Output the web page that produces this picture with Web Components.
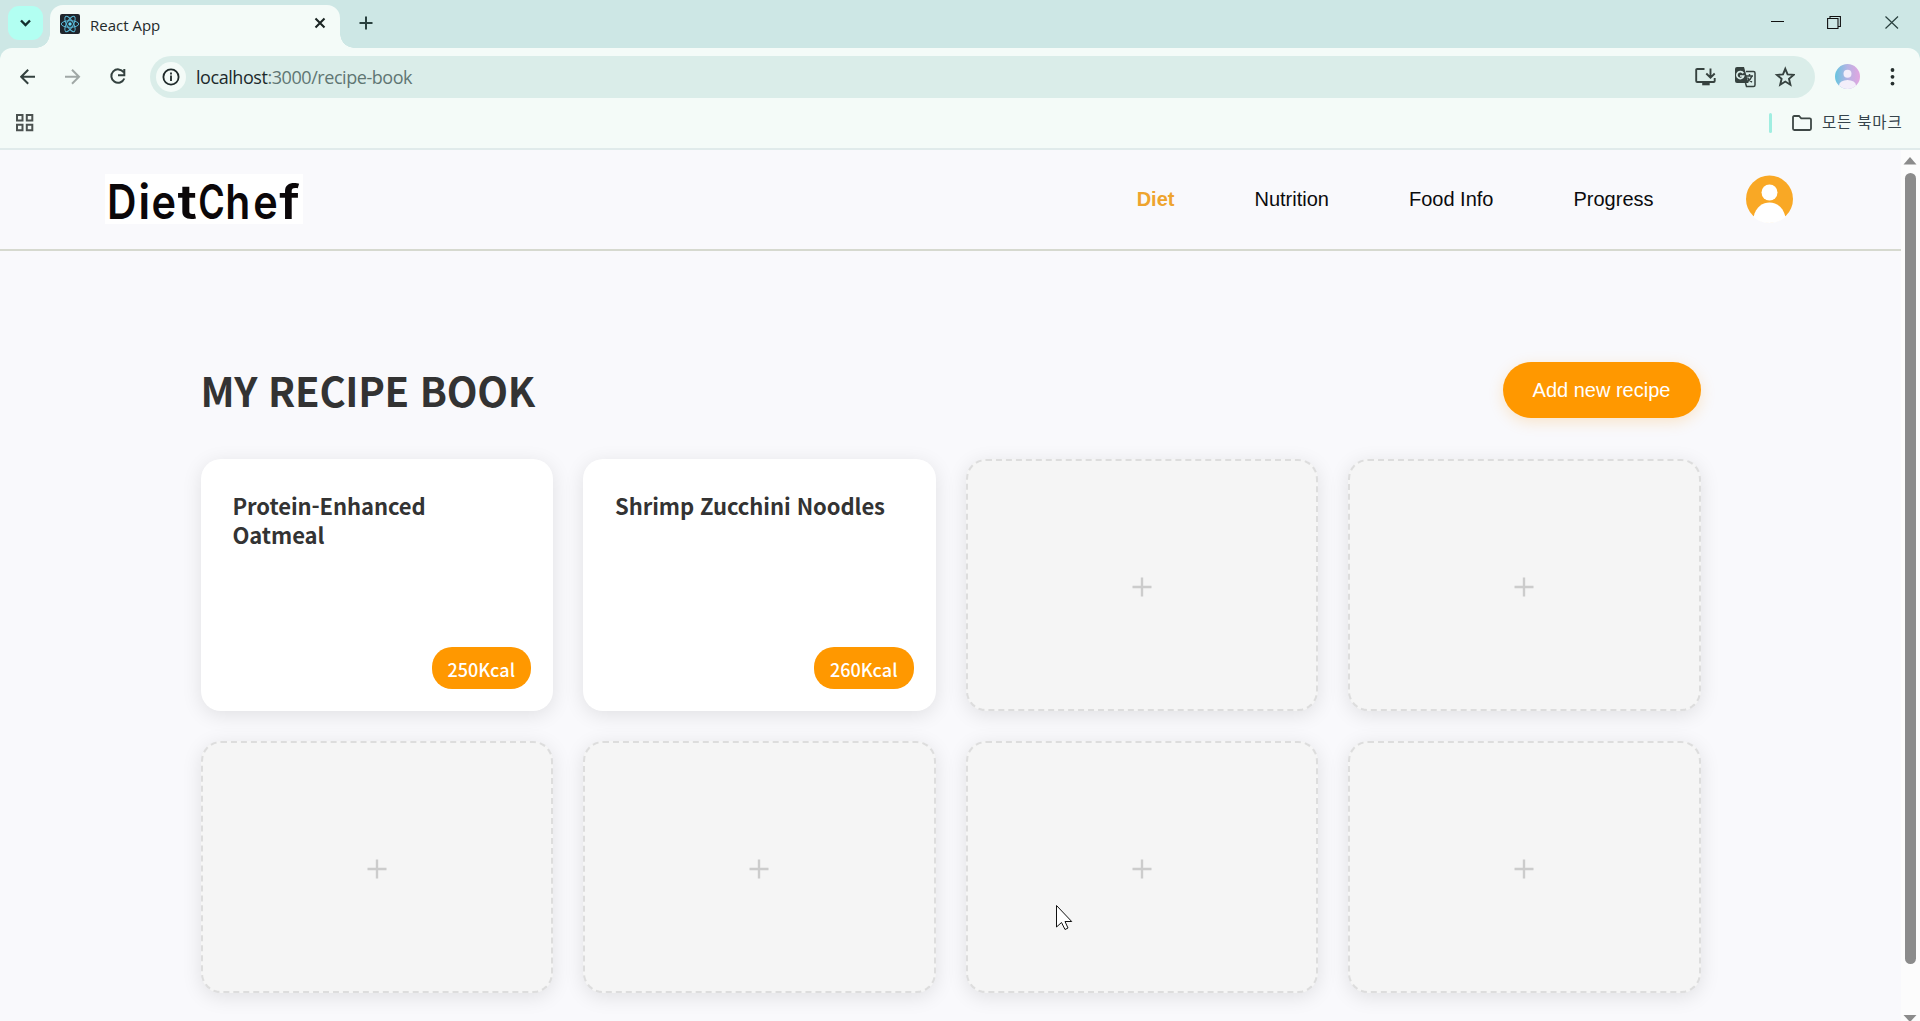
<!DOCTYPE html>
<html lang="ko">
<head>
<meta charset="utf-8">
<title>React App</title>
<style>
html,body{margin:0;height:100%;overflow:hidden}
body{font-family:"Liberation Sans",Arial,sans-serif;background:#f9f9fc}
</style>
</head>
<body>
<browser-window>
  <tab-strip slot="chrome"><span>React App</span></tab-strip>
  <tool-bar slot="chrome"><span slot="host">localhost</span><span slot="path">:3000/recipe-book</span></tool-bar>
  <bookmarks-bar slot="chrome">모든 북마크</bookmarks-bar>
  <app-header>
    <nav-link active>Diet</nav-link>
    <nav-link>Nutrition</nav-link>
    <nav-link>Food Info</nav-link>
    <nav-link>Progress</nav-link>
  </app-header>
  <recipe-book>
    <span slot="title">MY RECIPE BOOK</span>
    <span slot="action">Add new recipe</span>
    <recipe-card>Protein-Enhanced Oatmeal<span slot="kcal">250Kcal</span></recipe-card>
    <recipe-card>Shrimp Zucchini Noodles<span slot="kcal">260Kcal</span></recipe-card>
    <empty-card></empty-card>
    <empty-card></empty-card>
    <empty-card></empty-card>
    <empty-card></empty-card>
    <empty-card></empty-card>
    <empty-card></empty-card>
  </recipe-book>
  <scroll-bar slot="scroll"></scroll-bar>
</browser-window>
<mouse-pointer></mouse-pointer>

<script>
const define = (name, html) => {
  const t = document.createElement('template');
  t.innerHTML = html;
  customElements.define(name, class extends HTMLElement {
    constructor() {
      super();
      this.attachShadow({ mode: 'open' }).append(t.content.cloneNode(true));
    }
  });
};

define('browser-window', `
<style>
:host{display:flex;flex-direction:column;width:1920px;height:1021px;overflow:hidden;background:#cde7e5}
.view{display:flex;flex:1;min-height:0;background:#f9f9fc}
.page{flex:1;min-width:0;overflow:hidden}
</style>
<slot name="chrome"></slot>
<div class="view"><div class="page"><slot></slot></div><slot name="scroll"></slot></div>`);

define('tab-strip', `
<style>
:host{display:flex;height:48px;background:#cde7e5;font:16px "Open Sans","Noto Sans",sans-serif;color:#1f2a2a}
.search{display:flex;width:35px;height:34px;margin:6px 7px 0 8px;border-radius:11px;background:#b2fff2}
.tab{display:flex;align-items:center;box-sizing:border-box;width:290px;height:43px;margin-top:5px;padding:0 14px 6px 10px;border-radius:13px 13px 0 0;background:#f4fbf8;position:relative}
.tab::before,.tab::after{content:"";position:absolute;bottom:0;width:14px;height:14px}
.tab::before{left:-14px;background:radial-gradient(circle at 0 0,transparent 13.5px,#f4fbf8 14px)}
.tab::after{right:-14px;background:radial-gradient(circle at 100% 0,transparent 13.5px,#f4fbf8 14px)}
.name{flex:1;margin:3px 0 0 10px;font-size:15px;letter-spacing:0}
.plus{margin:13px 0 0 18.500px}
.win{display:flex;margin:12px 21px 0 auto}
svg{display:block}
</style>
<div class="search"><svg width="35" height="34" fill="none" stroke="#13302d" stroke-width="2.4"><path d="M13 14.500l4.500 4.500 4.500-4.500"/></svg></div>
<div class="tab">
<svg width="20" height="20" viewBox="0 0 20 20" fill="none" stroke="#5ab8d6" stroke-width="1"><rect width="20" height="20" rx="2" fill="#20252c" stroke="none"/><ellipse cx="10" cy="10" rx="8.700" ry="3.300"/><ellipse cx="10" cy="10" rx="8.700" ry="3.300" transform="rotate(60 10 10)"/><ellipse cx="10" cy="10" rx="8.700" ry="3.300" transform="rotate(120 10 10)"/><circle cx="10" cy="10" r="1.700" fill="#61dafb" stroke="none"/></svg>
<div class="name"><slot></slot></div>
<svg width="12" height="12" stroke="#1b2524" stroke-width="2.1" style="margin-top:-1px"><path d="M1.500 1.500l9 9M10.500 1.500l-9 9"/></svg>
</div>
<svg class="plus" width="14" height="20" stroke="#29403e" stroke-width="2"><path d="M.5 10h13M7 3.500v13"/></svg>
<div class="win">
<svg width="20" height="20" stroke="#111" stroke-width="1"><path d="M4 9.500h13"/></svg>
<svg style="margin-left:40px" width="14" height="20" fill="none" stroke="#111" stroke-width="1.1"><path d="M.6 6.500h10.400v10H.6zM3 6.500v-2h10.400v10H11"/></svg>
<svg style="margin-left:44px" width="14" height="20" stroke="#29403e" stroke-width="1.200"><path d="M.5 4.500l12.500 12M13 4.500L.5 16.500"/></svg>
</div>`);

define('tool-bar', `
<style>
:host{display:flex;align-items:center;box-sizing:border-box;height:50px;background:#f4fbf8;padding:8px 20px 0 20px;border-radius:12px 12px 0 0;font:18px "Open Sans","Noto Sans",sans-serif}
.pill{display:flex;align-items:center;box-sizing:border-box;width:1665px;height:42px;margin-left:5px;padding:0 20px 0 6px;border-radius:21px;background:#daede9}
.info{display:flex;width:30px;height:30px;border-radius:50%;background:#f4fbf8}
.url{flex:1;margin:0 0 0 10px;letter-spacing:-.44px;color:#5f7673}
.url .h{color:#1c2a2b}
svg{display:block;flex:none}
</style>
<svg width="125" height="20" fill="none" stroke="#33413f" stroke-width="2"><path d="M15 9.700H1.500M8.200 2.700l-7 7 7 7"/><path stroke="#a0a8a6" d="M45 9.700h13.500M52 2.700l7 7-7 7"/><path d="M103.600 5.300A6.700 6.700 0 1 0 104.300 11.500M104.300 2v6.200H98"/></svg>
<div class="pill">
<div class="info"><svg width="30" height="30" fill="none" stroke="#1f2a2a" stroke-width="1.8"><circle cx="15" cy="15" r="7.600"/><path d="M15 13.500v5.500M15 10.500v1.900"/></svg></div>
<div class="url"><span class="h"><slot name="host"></slot></span><slot name="path"></slot></div>
<svg width="100" height="24" fill="none" stroke="#36423f" stroke-width="1.900">
<path d="M9.500 4H2.200Q1.200 4 1.200 5v11q0 1 1 1h16.500q1 0 1-1v-3M15.500 3.500v9M11.300 8.500l4.200 4.200 4.200-4.200"/><path stroke-width="2.600" d="M7.200 19h7.500"/>
<path fill="#36423f" stroke="none" d="M42 2h7l4.500 16H42q-2 0-2-2V4q0-2 2-2z"/><path stroke-width="1.500" d="M51 6.500h7.500q1.500 0 1.500 1.500v12q0 1.500-1.500 1.500h-7l-1-3.500M50.500 11h7.500M54.500 9v2M57 11q-1.500 4-5 6M52.500 12.500q1.500 3 4.500 4.500"/><path stroke="#daede9" stroke-width="1.700" d="M48.300 8.200A3.500 3.500 0 1 0 48.700 11H45"/>
<path stroke-width="1.900" d="M90.300 3.800l2.300 5.600 6 .5-4.600 3.900 1.400 5.900-5.100-3.200-5.100 3.200 1.400-5.900L82 9.900l6-.5z"/>
</svg>
</div>
<svg style="margin-left:20px;margin-top:-2px" width="25" height="25" viewBox="0 0 25 25"><defs><linearGradient id="g"><stop offset="0" stop-color="#66c4df"/><stop offset=".5" stop-color="#b5b4e4"/><stop offset="1" stop-color="#e3a5e0"/></linearGradient><clipPath id="c"><circle cx="12.500" cy="12.500" r="12.500"/></clipPath></defs><g clip-path="url(#c)"><path fill="url(#g)" d="M0 0h25v25H0z"/><g fill="#f3eefa"><circle cx="12.500" cy="9.800" r="4"/><ellipse cx="12.500" cy="21.500" rx="8.500" ry="5.500"/></g></g></svg>
<svg style="margin-left:auto;margin-right:5px" width="5" height="20" fill="#27302f"><circle cx="2.500" cy="3" r="1.900"/><circle cx="2.500" cy="9.800" r="1.900"/><circle cx="2.500" cy="16.600" r="1.900"/></svg>`);

define('bookmarks-bar', `
<style>
:host{display:flex;align-items:center;box-sizing:border-box;height:52px;padding:0 17px 0 15px;background:#f4fbf8;border-bottom:2px solid #e0ebeb;font:15.500px "Noto Sans CJK KR",sans-serif;color:#36444c}
.sep{width:3px;height:20px;border-radius:2px;background:#a0eee1;margin:0 20px 0 auto}
.t{width:81px;margin-left:10px;letter-spacing:.8px;line-height:20px;margin-top:-4px;white-space:nowrap}
svg{display:block}
</style>
<svg width="20" height="20" fill="none" stroke="#4b5250" stroke-width="2"><path d="M2 2h5.500v5.500H2zM11.800 2h5.500v5.500h-5.500zM2 11.800h5.500v5.500H2zM11.800 11.800h5.500v5.500h-5.500z"/></svg>
<div class="sep"></div>
<svg width="20" height="16" fill="none" stroke="#3d4745" stroke-width="1.800"><path d="M1 2.500Q1 1 2.300 1H7l2.200 2.300h8.500Q19 3.300 19 4.600v9Q19 15 17.700 15H2.300Q1 15 1 13.600z"/></svg>
<div class="t"><slot></slot></div>`);

define('app-header', `
<style>
:host{display:flex;align-items:center;box-sizing:border-box;height:101px;padding:0 108px 2px 105px;border-bottom:2px solid #d6d9cf;background:#f9f9fc}
.logo{display:block;width:198px;height:50px;background:#fff;overflow:visible}
nav{display:flex;margin-left:auto;gap:80px}
.me{display:block;margin-left:92.500px}
text{font:600 48px Inter,sans-serif}
</style>
<svg class="logo" viewBox="0 0 198 50"><text y="44.500" fill="#0b0709"><tspan x="2" textLength="29.500" lengthAdjust="spacingAndGlyphs">D</tspan><tspan x="33.200" textLength="12" lengthAdjust="spacingAndGlyphs">i</tspan><tspan x="46.500" textLength="24.500" lengthAdjust="spacingAndGlyphs">e</tspan><tspan x="72.500" textLength="19.500" lengthAdjust="spacingAndGlyphs">t</tspan><tspan x="93.200" textLength="26.500" lengthAdjust="spacingAndGlyphs">C</tspan><tspan x="120.200" textLength="25" lengthAdjust="spacingAndGlyphs">h</tspan><tspan x="148.200" textLength="24.500" lengthAdjust="spacingAndGlyphs">e</tspan><tspan x="174.300" textLength="20.500" lengthAdjust="spacingAndGlyphs">f</tspan></text></svg>
<nav><slot></slot></nav>
<svg class="me" width="47" height="48" viewBox="0 0 47 48"><defs><clipPath id="m"><circle cx="23.500" cy="24" r="23.500"/></clipPath></defs><path clip-path="url(#m)" fill="#f9a825" d="M0 0h47v48H0z"/><g fill="#fff"><circle cx="23.500" cy="17.500" r="8"/><path d="M7.500 42C10 31.500 17 27.500 23.500 27.500S37 31.500 39.500 42Q33 48 23.500 48T7.500 42z"/></g></svg>`);

define('nav-link', `
<style>
:host{display:block;font:20px/24px "Liberation Sans",Arial,sans-serif;color:#0b0b0d}
:host([active]){color:#eea42e;font-weight:700}
</style><slot></slot>`);

define('recipe-book', `
<style>
:host{display:block;width:1500px;padding:111px 0 0 200.500px}
header{display:flex;align-items:center;justify-content:space-between;height:56px;margin-bottom:41px}
h1{margin:0;font:700 40px/56px "Noto Sans CJK KR",sans-serif;letter-spacing:-.3px;color:#333;white-space:nowrap}
button{box-sizing:border-box;width:198px;height:56px;border:0;border-radius:28px;background:#ff9800;color:#fff;font:20px "Liberation Sans",Arial,sans-serif;padding:1px 0 0;box-shadow:0 4px 15px rgba(255,152,0,.2)}
.grid{display:grid;grid-template-columns:repeat(4,1fr);grid-auto-rows:252px;gap:30px}
</style>
<header><h1><slot name="title"></slot></h1><button><slot name="action"></slot></button></header>
<div class="grid"><slot></slot></div>`);

define('recipe-card', `
<style>
:host{display:flex;flex-direction:column;justify-content:space-between;box-sizing:border-box;padding:32px 22px 22px 32px;border-radius:20px;background:#fff;box-shadow:0 4px 20px rgba(0,0,0,.1);font-family:"Noto Sans CJK KR",sans-serif}
.name{width:280px;font-weight:700;font-size:22px;line-height:29px;letter-spacing:-.08px;color:#333}
.kcal{align-self:flex-end;box-sizing:border-box;width:99.500px;height:42px;border-radius:20px;background:#ff9800;color:#fff;font-weight:500;font-size:18px;line-height:44px;text-align:center;letter-spacing:.05px}
</style>
<div class="name"><slot></slot></div><div class="kcal"><slot name="kcal"></slot></div>`);

define('empty-card', `
<style>
:host{display:flex;align-items:center;justify-content:center;box-sizing:border-box;border:2px dashed #ddd;border-radius:20px;background:#f5f5f5;box-shadow:0 4px 20px rgba(0,0,0,.1)}
svg{display:block;margin-top:4px}
</style>
<svg width="20" height="20" stroke="#ccc" stroke-width="2.4"><path d="M.5 10h19M10 .5v19"/></svg>`);

define('scroll-bar', `
<style>
:host{display:flex;flex-direction:column;align-items:center;box-sizing:border-box;width:19px;padding:7px 1px 0 0;background:#fcfcfc}
i{flex:none;width:11px;height:791px;margin:8px 0 51px;border-radius:6px;background:#8b8b8b}
svg{display:block;flex:none}
</style>
<svg width="14" height="8" fill="#8b8b8b"><path d="M7 0l6.500 7.500H.5z"/></svg><i></i>
<svg width="14" height="8" fill="#8b8b8b"><path d="M.5 0h13L7 7z"/></svg>`);

define('mouse-pointer', `
<style>:host{display:block;position:absolute;left:1056px;top:904px}svg{display:block}</style>
<svg width="18" height="28" fill="#fff" stroke="#111" stroke-width="1"><path d="M.5 1.500v21.500l5-4.500 3.500 7 3-1.500-3-6.500h6.700z"/></svg>`);
</script>
</body>
</html>
